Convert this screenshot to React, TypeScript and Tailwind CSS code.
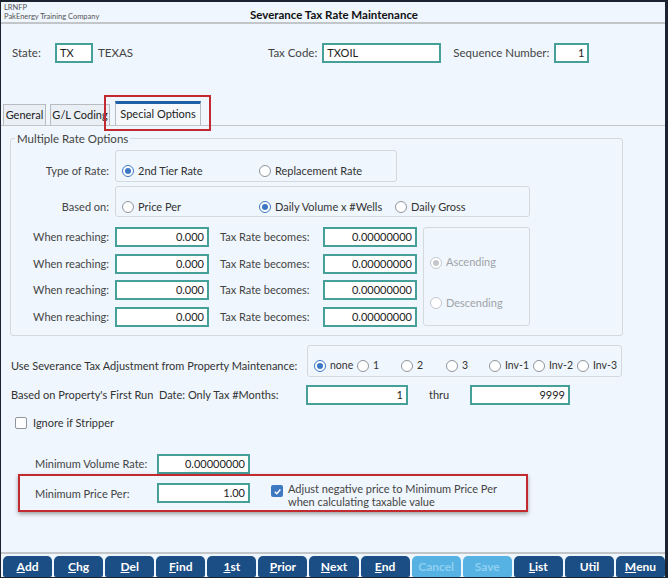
import React from "react";

const font = { fontFamily: "Lato, 'Noto Sans', sans-serif" };

function Radio({ checked, disabled }: { checked?: boolean; disabled?: boolean }) {
  return (
    <span
      className={`inline-flex items-center justify-center w-[12px] h-[12px] rounded-full border bg-white shrink-0 ${
        disabled ? "border-[#c4c8cc]" : checked ? "border-[#3b78c4]" : "border-[#8f959b]"
      }`}
    >
      {checked && (
        <span className={`w-[6px] h-[6px] rounded-full ${disabled ? "bg-[#c4c8cc]" : "bg-[#3b78c4]"}`} />
      )}
    </span>
  );
}

function Opt({ label, checked, w, disabled }: { label: string; checked?: boolean; w?: string; disabled?: boolean }) {
  return (
    <span className={`flex items-center gap-[4px] ${w ?? ""} ${disabled ? "text-[#a0a4a8]" : ""}`}>
      <Radio checked={checked} disabled={disabled} />
      <span>{label}</span>
    </span>
  );
}

function Field({ value, w, align = "right" }: { value: string; w: string; align?: "left" | "right" }) {
  return (
    <div
      className={`${w} h-[20px] border-2 border-[#45a09a] bg-white flex items-center px-[3px] text-[11px] text-[#222] shrink-0 ${
        align === "right" ? "justify-end" : "justify-start"
      }`}
    >
      {value}
    </div>
  );
}

const buttons: { t: string; u?: number; off?: boolean }[] = [
  { t: "Add", u: 0 },
  { t: "Chg", u: 0 },
  { t: "Del", u: 0 },
  { t: "Find", u: 0 },
  { t: "1st", u: 0 },
  { t: "Prior", u: 0 },
  { t: "Next", u: 0 },
  { t: "End", u: 0 },
  { t: "Cancel", off: true },
  { t: "Save", off: true },
  { t: "List", u: 0 },
  { t: "Util" },
  { t: "Menu", u: 0 },
];

export default function App() {
  const rows = [0, 1, 2, 3];
  return (
    <div
      className="w-[668px] h-[578px] bg-[#1b2230] pt-[2px] pl-[1px] pr-[3px] pb-[1px]"
      style={font}
    >
      <div className="relative w-full h-full bg-[#eff6fd] flex flex-col text-[11px] text-[#333]">
        {/* header */}
        <div className="h-[22px] border-b-2 border-[#c3c6c9] grid grid-cols-[1fr_auto_1fr] items-start">
          <div className="pl-[3px] text-[7.5px] leading-[9px] text-[#555] pt-[1px]">
            <div>LRNFP</div>
            <div>PakEnergy Training Company</div>
          </div>
          <div className="font-bold text-[11.5px] text-[#111] pt-[4px] pl-[2px]">Severance Tax Rate Maintenance</div>
          <div />
        </div>

        {/* key row */}
        <div className="flex items-center mt-[19px] h-[20px] text-[11.5px] text-[#444]">
          <span className="ml-[11px] w-[43px]">State:</span>
          <Field value="TX" w="w-[38px]" align="left" />
          <span className="ml-[5px]">TEXAS</span>
          <span className="ml-[135px]">Tax Code:</span>
          <span className="ml-[5px]">
            <Field value="TXOIL" w="w-[119px]" align="left" />
          </span>
          <span className="ml-[12px]">Sequence Number:</span>
          <span className="ml-[5px]">
            <Field value="1" w="w-[35px]" />
          </span>
        </div>

        {/* tabs */}
        <div className="mt-[38px] h-[25px] flex items-end border-b border-[#c3c6c9] pl-[2px] text-[11px] text-[#222]">
          <div className="h-[21px] w-[43px] flex items-center justify-center border border-b-0 border-[#b8bcc0] bg-[#e9eff5]">General</div>
          <div className="h-[21px] w-[60px] ml-[4px] flex items-center justify-center border border-b-0 border-[#b8bcc0] bg-[#e9eff5]">G/L Coding</div>
          <div className="h-[24px] w-[86px] ml-[5px] flex items-center justify-center border border-b-0 border-[#b8bcc0] border-t-[3px] border-t-[#1e5fa6] bg-[#f6f9fc]">
            Special Options
          </div>
        </div>
        <div className="absolute left-[103px] top-[93px] w-[107px] h-[36px] border-2 border-[#c22a2f]" />

        {/* content */}
        <div className="pl-[9px] pr-[42px] mt-[4px]">
          <fieldset className="border border-[#d4d9de] rounded-[3px] pb-[8px] pt-[0px]">
            <legend className="ml-[4px] px-[2px] text-[11.5px] text-[#444]">Multiple Rate Options</legend>
            <div className="flex items-center mt-[3px]">
              <span className="w-[98px] text-right text-[#444] pt-[10px]">Type of Rate:</span>
              <div className="ml-[6px] w-[282px] h-[32px] border border-[#d4d9de] rounded-[3px] flex items-center pt-[10px] pl-[6px]">
                <Opt label="2nd Tier Rate" checked w="w-[137px]" />
                <Opt label="Replacement Rate" />
              </div>
            </div>
            <div className="flex items-center mt-[4px]">
              <span className="w-[98px] text-right text-[#444] pt-[10px]">Based on:</span>
              <div className="ml-[6px] w-[415px] h-[31px] border border-[#d4d9de] rounded-[3px] flex items-center pt-[10px] pl-[6px]">
                <Opt label="Price Per" w="w-[137px]" />
                <Opt label="Daily Volume x #Wells" checked w="w-[136px]" />
                <Opt label="Daily Gross" />
              </div>
            </div>
            <div className="flex mt-[10px]">
              <div className="flex flex-col gap-[6.5px]">
                {rows.map((r) => (
                  <div key={r} className="flex items-center h-[20px]">
                    <span className="w-[98px] text-right text-[#444]">When reaching:</span>
                    <span className="ml-[6px]">
                      <Field value="0.000" w="w-[94px]" />
                    </span>
                    <span className="ml-[11px] w-[103px] text-[#444]">Tax Rate becomes:</span>
                    <Field value="0.00000000" w="w-[94px]" />
                  </div>
                ))}
              </div>
              <div className="ml-[6px] w-[107px] h-[99px] border border-[#d4d9de] rounded-[3px] flex flex-col justify-start pt-[26px] gap-[24px] pl-[6px]">
                <Opt label="Ascending" checked disabled />
                <Opt label="Descending" disabled />
              </div>
            </div>
          </fieldset>
        </div>

        {/* adjustment */}
        <div className="flex items-center mt-[9px] text-[11px] text-[#333]">
          <span className="ml-[10px] w-[296px] pt-[10px]">Use Severance Tax Adjustment from Property Maintenance:</span>
          <div className="w-[315px] h-[32px] border border-[#d4d9de] rounded-[3px] flex items-center pt-[10px] pl-[6px] text-[10.5px]">
            <Opt label="none" checked w="w-[43px]" />
            <Opt label="1" w="w-[44px]" />
            <Opt label="2" w="w-[45px]" />
            <Opt label="3" w="w-[43px]" />
            <Opt label="Inv-1" w="w-[44px]" />
            <Opt label="Inv-2" w="w-[44px]" />
            <Opt label="Inv-3" />
          </div>
        </div>

        <div className="flex items-center mt-[8px] h-[20px] text-[11px] text-[#333]">
          <span className="ml-[10px] w-[295px]">Based on Property's First Run&nbsp; Date: Only Tax #Months:</span>
          <Field value="1" w="w-[102px]" />
          <span className="ml-[21px] w-[41px]">thru</span>
          <Field value="9999" w="w-[100px]" />
        </div>

        <div className="flex items-center mt-[10px] ml-[14px] gap-[6px] text-[11px] text-[#333]">
          <span className="w-[12px] h-[12px] border border-[#8f959b] rounded-[2px] bg-white" />
          <span>Ignore if Stripper</span>
        </div>

        <div className="flex items-center mt-[23px] h-[20px] text-[11px] text-[#444]">
          <span className="ml-[34px] w-[122px]">Minimum Volume Rate:</span>
          <Field value="0.00000000" w="w-[93px]" />
        </div>

        <div className="ml-[17px] w-[510px] h-[38px] border-2 border-[#c22a2f] shadow-[0_2px_4px_rgba(0,0,0,0.35)] flex items-start pt-[7px] text-[11px] text-[#444]">
          <span className="ml-[15px] w-[122px] mt-[3px]">Minimum Price Per:</span>
          <Field value="1.00" w="w-[93px]" />
          <span className="ml-[21px] mt-[2px] w-[12px] h-[12px] rounded-[2px] bg-[#3d78c0] flex items-center justify-center shrink-0">
            <svg width="9" height="9" viewBox="0 0 10 10">
              <path d="M2 5.2 L4.2 7.4 L8.2 2.8" stroke="white" strokeWidth="1.6" fill="none" />
            </svg>
          </span>
          <div className="ml-[5px] leading-[13px] text-[11px] -mt-[1px]">
            <div>Adjust negative price to Minimum Price Per</div>
            <div>when calculating taxable value</div>
          </div>
        </div>

        {/* bottom buttons */}
        <div className="mt-auto border-t-2 border-[#c3c6c9] pt-[2px] pl-[2px] flex gap-[2px]">
          {buttons.map((b) => (
            <div
              key={b.t}
              className={`flex-1 h-[21px] rounded-t-[5px] rounded-b-[2px] flex items-center justify-center font-bold text-[12px] ${
                b.off ? "bg-[#56b2e3] text-[#8fd0f2]" : "bg-[#1b4e84] text-white"
              }`}
            >
              {b.u === 0 ? (
                <>
                  <span className="underline">{b.t[0]}</span>
                  {b.t.slice(1)}
                </>
              ) : (
                b.t
              )}
            </div>
          ))}
        </div>
      </div>
    </div>
  );
}
